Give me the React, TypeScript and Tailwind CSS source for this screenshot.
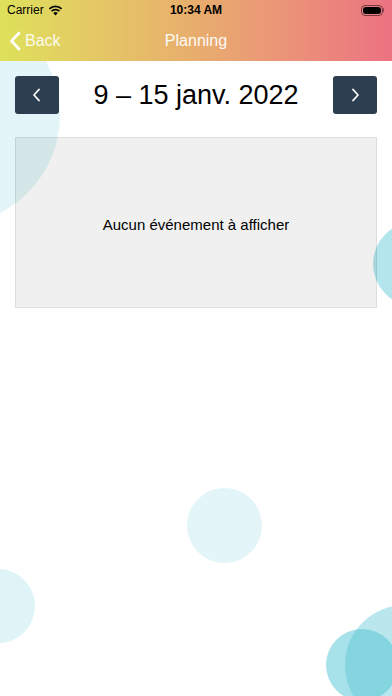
import React from "react";

const circles = [
  "left-[-160px] top-[5px] w-[220px] h-[220px] bg-[#4fc3d3]/[0.16]",
  "left-[373px] top-[222px] w-[84px] h-[84px] bg-[#4fc3d3]/[0.43]",
  "left-[187px] top-[488px] w-[75px] h-[75px] bg-[#4fc3d3]/[0.16]",
  "left-[-39px] top-[569px] w-[74px] h-[74px] bg-[#4fc3d3]/[0.18]",
  "left-[326px] top-[629px] w-[72px] h-[72px] bg-[#4fc3d3]/50",
  "left-[345px] top-[605px] w-[120px] h-[120px] bg-[#4fc3d3]/40",
];

function Chevron({ dir }: { dir: "left" | "right" }) {
  return (
    <svg width="10" height="14" viewBox="0 0 10 14" fill="none">
      <path
        d={dir === "left" ? "M7 1.5 L2 7 L7 12.5" : "M3 1.5 L8 7 L3 12.5"}
        stroke="white"
        strokeWidth="1.8"
        strokeLinecap="round"
        strokeLinejoin="round"
      />
    </svg>
  );
}

export default function App() {
  return (
    <div
      className="relative w-[392px] h-[696px] overflow-hidden bg-white"
      style={{ fontFamily: '"Liberation Sans", Arial, sans-serif' }}
    >
      {/* decorative bubbles */}
      {circles.map((c, i) => (
        <div key={i} className={`absolute rounded-full ${c}`} />
      ))}

      <div className="relative">
        {/* header */}
        <div className="h-[61px] bg-gradient-to-r from-[#dee15a] via-[#e8ad6d] to-[#ec7282]">
          <div className="h-[20px] flex items-center justify-between px-[7px] text-[12px] text-black">
            <div className="flex items-center gap-[4px] w-[100px]">
              <span>Carrier</span>
              <svg width="15" height="11" viewBox="0 0 15 11">
                <path d="M7.5 10.5 L5.3 8 A3.2 3.2 0 0 1 9.7 8 Z" fill="black" />
                <path d="M3.6 6.2 A5.6 5.6 0 0 1 11.4 6.2" stroke="black" strokeWidth="1.7" fill="none" />
                <path d="M1.4 3.8 A8.8 8.8 0 0 1 13.6 3.8" stroke="black" strokeWidth="1.7" fill="none" />
              </svg>
            </div>
            <span className="font-bold">10:34 AM</span>
            <div className="w-[100px] flex justify-end pr-[1px]">
              <div className="flex items-center">
                <div className="w-[22px] h-[11px] rounded-[4px] border border-black/50 p-[1px]">
                  <div className="w-full h-full bg-black rounded-[3px]" />
                </div>
                <div className="w-[1.5px] h-[4px] bg-black/40 rounded-r" />
              </div>
            </div>
          </div>
          <div className="h-[41px] flex items-center relative text-white text-[16px]">
            <div className="flex items-center pl-[9px] gap-[4px]">
              <svg width="12" height="20" viewBox="0 0 12 20" fill="none">
                <path d="M10 2 L2.5 10 L10 18" stroke="white" strokeWidth="2.8" strokeLinecap="round" strokeLinejoin="round" />
              </svg>
              <span className="text-[16px] opacity-90">Back</span>
            </div>
            <span className="absolute left-0 right-0 text-center pointer-events-none opacity-95">Planning</span>
          </div>
        </div>

        {/* content */}
        <div className="px-[15px] pt-[15px]">
          <div className="flex items-center justify-between">
            <button className="w-[44px] h-[38px] rounded-[3px] bg-[#2c3e50] flex items-center justify-center">
              <Chevron dir="left" />
            </button>
            <span className="text-[27px] text-black leading-none">9 – 15 janv. 2022</span>
            <button className="w-[44px] h-[38px] rounded-[3px] bg-[#2c3e50] flex items-center justify-center">
              <Chevron dir="right" />
            </button>
          </div>
          <div className="mt-[23px] h-[171px] border border-black/[0.08] bg-black/[0.06] flex items-center justify-center">
            <span className="text-[15px] text-black mt-[5px]">Aucun événement à afficher</span>
          </div>
        </div>
      </div>
    </div>
  );
}
